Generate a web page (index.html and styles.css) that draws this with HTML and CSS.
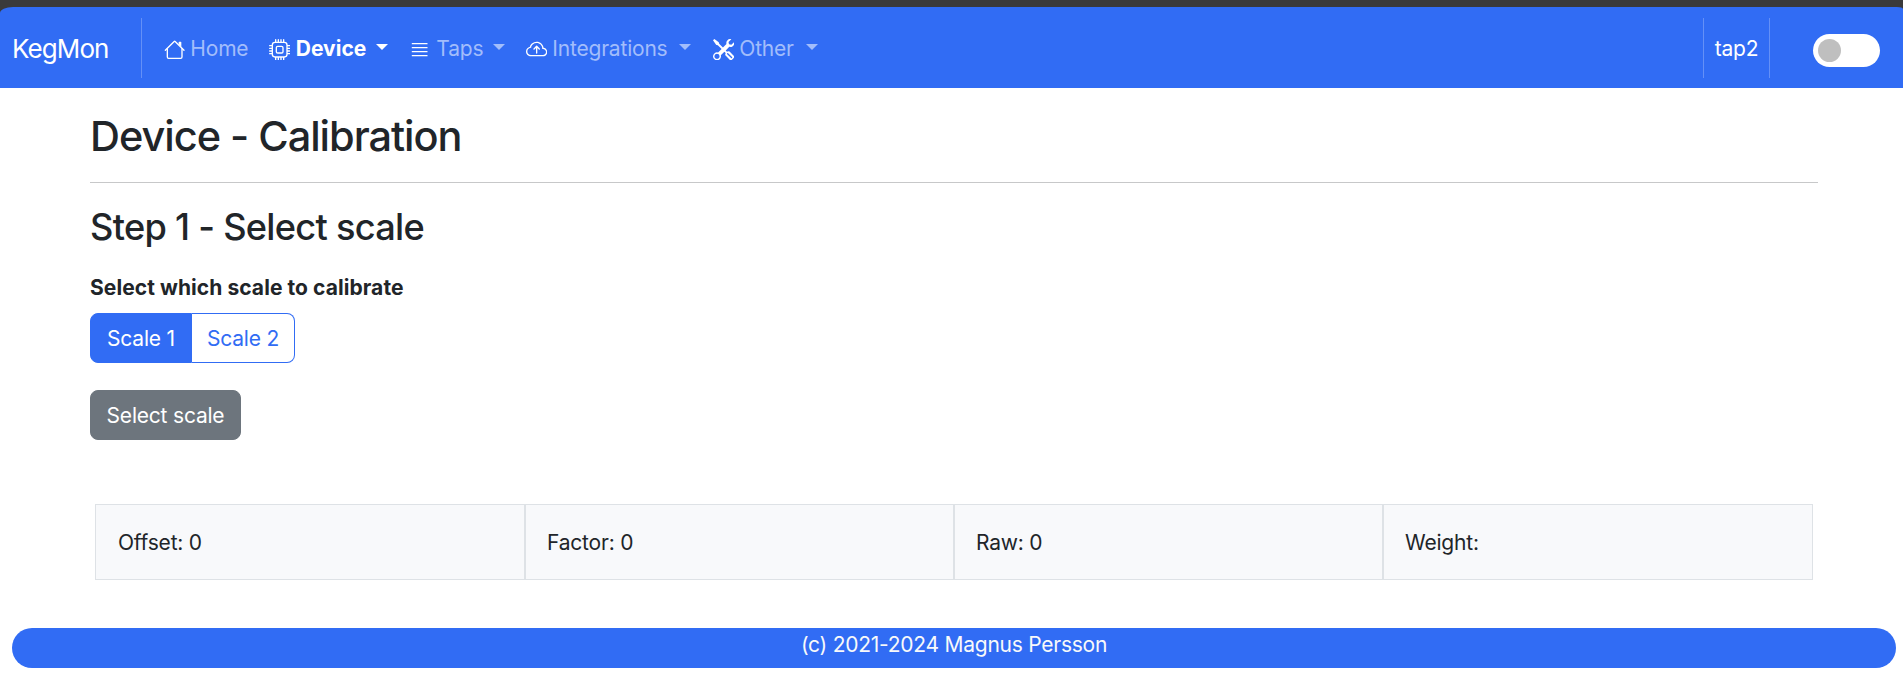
FILE: index.html
```html
<!DOCTYPE html>
<html lang="en">
<head>
<meta charset="utf-8">
<title>KegMon</title>
<link rel="stylesheet" href="styles.css">
</head>
<body>
<div class="top">
<nav class="navbar">
  <a class="brand">KegMon</a>
  <div class="rule"></div>
  <a class="item home"><svg class="icon" viewBox="0 0 16 16"><path fill-rule="evenodd" d="M2 13.5V7h1v6.5a.5.5 0 0 0 .5.5h9a.5.5 0 0 0 .5-.5V7h1v6.5a1.5 1.5 0 0 1-1.5 1.5h-9A1.5 1.5 0 0 1 2 13.5zm11-11V6l-2-2V2.5a.5.5 0 0 1 .5-.5h1a.5.5 0 0 1 .5.5z"/><path fill-rule="evenodd" d="M7.293 1.5a1 1 0 0 1 1.414 0l6.647 6.646a.5.5 0 0 1-.708.708L8 2.207 1.354 8.854a.5.5 0 1 1-.708-.708L7.293 1.5z"/></svg><span class="label">Home</span></a>
  <a class="item device active"><svg class="icon" viewBox="0 0 16 16"><path d="M5 0a.5.5 0 0 1 .5.5V2h1V.5a.5.5 0 0 1 1 0V2h1V.5a.5.5 0 0 1 1 0V2h1V.5a.5.5 0 0 1 1 0V2A2.5 2.5 0 0 1 14 4.5h1.5a.5.5 0 0 1 0 1H14v1h1.5a.5.5 0 0 1 0 1H14v1h1.5a.5.5 0 0 1 0 1H14v1h1.5a.5.5 0 0 1 0 1H14a2.5 2.5 0 0 1-2.5 2.5v1.5a.5.5 0 0 1-1 0V14h-1v1.5a.5.5 0 0 1-1 0V14h-1v1.5a.5.5 0 0 1-1 0V14h-1v1.5a.5.5 0 0 1-1 0V14A2.5 2.5 0 0 1 2 11.5H.5a.5.5 0 0 1 0-1H2v-1H.5a.5.5 0 0 1 0-1H2v-1H.5a.5.5 0 0 1 0-1H2v-1H.5a.5.5 0 0 1 0-1H2A2.5 2.5 0 0 1 4.5 2V.5A.5.5 0 0 1 5 0zm-.5 3A1.5 1.5 0 0 0 3 4.5v7A1.5 1.5 0 0 0 4.5 13h7a1.5 1.5 0 0 0 1.5-1.5v-7A1.5 1.5 0 0 0 11.5 3h-7zM5 6.5A1.5 1.5 0 0 1 6.5 5h3A1.5 1.5 0 0 1 11 6.5v3A1.5 1.5 0 0 1 9.5 11h-3A1.5 1.5 0 0 1 5 9.5v-3zM6.5 6a.5.5 0 0 0-.5.5v3a.5.5 0 0 0 .5.5h3a.5.5 0 0 0 .5-.5v-3a.5.5 0 0 0-.5-.5h-3z"/></svg><span class="label">Device</span><span class="caret"></span></a>
  <a class="item taps"><svg class="icon" viewBox="0 0 16 16"><path d="M2 12.5a.5.5 0 0 1 .5-.5h11a.5.5 0 0 1 0 1h-11a.5.5 0 0 1-.5-.5zm0-3a.5.5 0 0 1 .5-.5h11a.5.5 0 0 1 0 1h-11a.5.5 0 0 1-.5-.5zm0-3a.5.5 0 0 1 .5-.5h11a.5.5 0 0 1 0 1h-11a.5.5 0 0 1-.5-.5zm0-3a.5.5 0 0 1 .5-.5h11a.5.5 0 0 1 0 1h-11a.5.5 0 0 1-.5-.5z"/></svg><span class="label">Taps</span><span class="caret"></span></a>
  <a class="item integrations"><svg class="icon" viewBox="0 0 16 16"><path fill-rule="evenodd" d="M7.646 5.146a.5.5 0 0 1 .708 0l2 2a.5.5 0 0 1-.708.708L8.5 6.707V10.5a.5.5 0 0 1-1 0V6.707L6.354 7.854a.5.5 0 1 1-.708-.708z"/><path d="M4.406 3.342A5.53 5.53 0 0 1 8 2c2.69 0 4.923 2 5.166 4.579C14.758 6.804 16 8.137 16 9.773 16 11.569 14.502 13 12.687 13H3.781C1.708 13 0 11.366 0 9.318c0-1.763 1.266-3.223 2.942-3.593.143-.863.698-1.723 1.464-2.383m.653.757c-.757.653-1.153 1.44-1.153 2.056v.448l-.445.049C2.064 6.805 1 7.952 1 9.318 1 10.785 2.23 12 3.781 12h8.906C13.98 12 15 10.988 15 9.773c0-1.216-1.02-2.228-2.313-2.228h-.5v-.5C12.188 4.825 10.328 3 8 3a4.53 4.53 0 0 0-2.941 1.1z"/></svg><span class="label">Integrations</span><span class="caret"></span></a>
  <a class="item other"><svg class="icon" viewBox="0 0 16 16"><path d="M1 0 0 1l2.2 3.081a1 1 0 0 0 .815.419h.07a1 1 0 0 1 .708.293l2.675 2.675-2.617 2.654A3.003 3.003 0 0 0 0 13a3 3 0 1 0 5.878-.851l2.654-2.617.968.968-.305.914a1 1 0 0 0 .242 1.023l3.27 3.27a.997.997 0 0 0 1.414 0l1.586-1.586a.997.997 0 0 0 0-1.414l-3.27-3.27a1 1 0 0 0-1.023-.242L10.5 9.5l-.96-.96 2.68-2.643A3.005 3.005 0 0 0 16 3q0-.405-.102-.777l-2.14 2.141L12 4l-.364-1.757L13.777.102a3 3 0 0 0-3.675 3.68L7.462 6.46 4.793 3.793a1 1 0 0 1-.293-.707v-.071a1 1 0 0 0-.419-.814zm9.646 10.646a.5.5 0 0 1 .708 0l2.914 2.915a.5.5 0 0 1-.707.707l-2.915-2.914a.5.5 0 0 1 0-.708M3 11l.471.242.529.026.287.445.445.287.026.529L5 13l-.242.471-.026.529-.445.287-.287.445-.529.026L3 15l-.471-.242L2 14.732l-.287-.445L1.268 14l-.026-.529L1 13l.242-.471.026-.529.445-.287.287-.445.529-.026z"/></svg><span class="label">Other</span><span class="caret"></span></a>
  <div class="end">
    <div class="host">tap2</div>
    <div class="switch"><span class="knob"></span></div>
  </div>
</nav>
</div>
<main class="content">
  <h1 class="title">Device - Calibration</h1>
  <hr class="line">
  <h2 class="step">Step 1 - Select scale</h2>
  <p class="prompt">Select which scale to calibrate</p>
  <div class="group"><button class="btn first">Scale 1</button><button class="btn second">Scale 2</button></div>
  <button class="btn submit">Select scale</button>
  <div class="values">
    <div class="cell offset">Offset: 0</div>
    <div class="cell factor">Factor: 0</div>
    <div class="cell raw">Raw: 0</div>
    <div class="cell weight">Weight:</div>
  </div>
</main>
<footer class="footer">(c) 2021-2024 Magnus Persson</footer>
</body>
</html>
```
FILE: styles.css
```css
* { box-sizing: border-box; }
body {
  margin: 0;
  background: #fff;
  color: #212529;
  font: 21px/32px Inter, "Liberation Sans", sans-serif;
  letter-spacing: -0.2px;
}
.top { background: #3a3a3a; padding-top: 7px; }
.navbar {
  display: flex;
  align-items: center;
  height: 81px;
  padding: 0 23px 0 12px;
  background: #316cf4;
  border-radius: 13px 6px 0 0 / 6px 2px 0 0;
  color: #fff;
}
.brand { width: 129px; padding-top: 3px; font-size: 26px; letter-spacing: -0.9px; }
.rule { width: 1px; height: 60px; margin-right: 22px; background: #6490f7; }
.item { display: flex; align-items: center; height: 32px; }
.icon { width: 21.33px; height: 21.33px; margin: 4px 5px 0 0; fill: #fff; flex: none; }
.label { padding-top: 2px; color: #a2bdfb; white-space: nowrap; }
.active .label { padding-left: 0.5px; color: #fff; font-weight: 700; letter-spacing: 0; }
.caret {
  margin: 0 0 1px auto;
  border: 6px solid transparent;
  border-top-color: #a2bdfb;
  border-bottom: 0;
}
.active .caret { border-top-color: #fff; }
.home { width: 84px; margin-right: 21px; }
.device { width: 119px; margin-right: 21px; }
.taps { width: 96px; margin-right: 21px; }
.taps .label { padding-left: 1px; }
.integrations { width: 165px; margin-right: 22px; }
.other { width: 105px; }
.end { display: flex; align-items: center; margin-left: auto; }
.host {
  width: 67px;
  height: 60px;
  margin-right: 43px;
  border: solid #6490f7;
  border-width: 0 1px;
  line-height: 62px;
  text-align: center;
}
.switch { width: 67px; height: 33px; margin-top: 5px; padding: 5px; border-radius: 17px; background: #fff; }
.knob { display: block; width: 23px; height: 23px; border-radius: 50%; background: #bfbfbf; }
.content { padding: 0 85px 0 90px; }
.title { margin: 0; padding-top: 22px; font-size: 41.5px; line-height: 52px; font-weight: 500; letter-spacing: -1.03px; }
.line { height: 1px; margin: 20px 0 0; border: 0; background: #c7c8c9; }
.step { margin: 0; padding-top: 21px; font-size: 36.2px; line-height: 46px; font-weight: 500; letter-spacing: -0.72px; }
.prompt { margin: 22px 0 9px; font-weight: 700; letter-spacing: 0.07px; }
.group { display: flex; }
.btn {
  height: 50px;
  padding: 2px 0 0;
  border: 1px solid #316cf4;
  border-radius: 8px;
  background: #fff;
  color: #316cf4;
  font: inherit;
  letter-spacing: inherit;
  text-align: center;
}
.first { width: 102px; border-radius: 8px 0 0 8px; background: #316cf4; color: #fff; }
.second { width: 103px; border-left: 0; border-radius: 0 8px 8px 0; }
.submit { display: block; width: 151px; margin-top: 27px; border-color: #6d757d; background: #6d757d; color: #fff; }
.values { display: grid; grid-template-columns: 430px 429px 429px 430px; margin: 64px 0 0 5px; }
.cell { height: 76px; padding: 22px 21px 20px; border: 1px solid #dee2e6; background: #f8f9fb; }
.offset { padding-left: 22px; }
.footer {
  height: 40px;
  margin: 48px 7px 0 12px;
  border-radius: 20px;
  background: #316cf4;
  color: #f8f9fa;
  line-height: 34px;
  letter-spacing: -0.25px;
  text-align: center;
}
```
